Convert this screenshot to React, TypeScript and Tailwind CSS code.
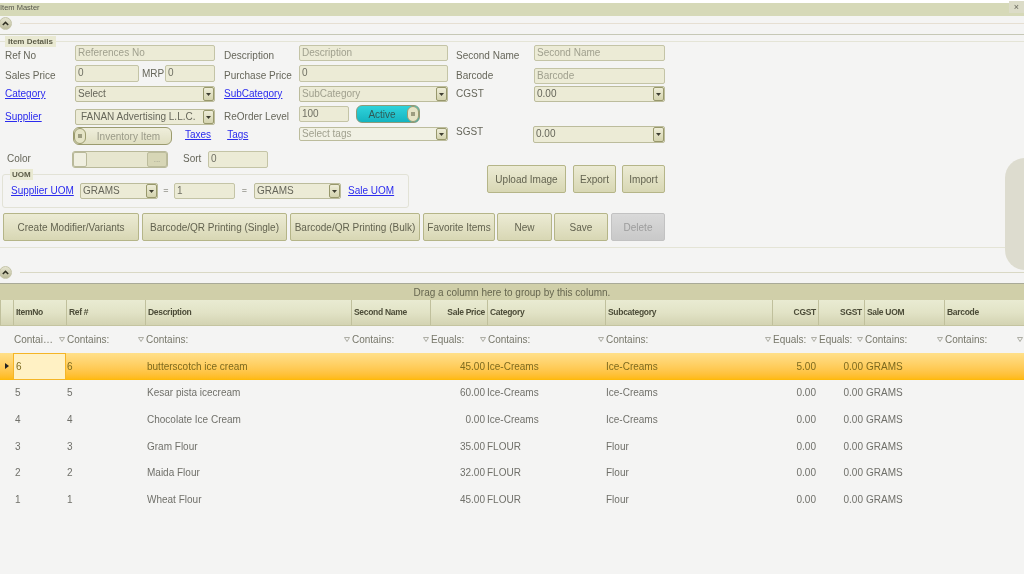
import * as React from "react";

const GRID_COLS =
  "grid grid-cols-[13px_53px_79px_206px_79px_57px_118px_167px_46px_46px_80px_80px]";

const rows = [
  { no: "6", ref: "6", desc: "butterscotch ice cream", price: "45.00", cat: "Ice-Creams", sub: "Ice-Creams", cgst: "5.00" },
  { no: "5", ref: "5", desc: "Kesar pista icecream", price: "60.00", cat: "Ice-Creams", sub: "Ice-Creams", cgst: "0.00" },
  { no: "4", ref: "4", desc: "Chocolate Ice Cream", price: "0.00", cat: "Ice-Creams", sub: "Ice-Creams", cgst: "0.00" },
  { no: "3", ref: "3", desc: "Gram Flour", price: "35.00", cat: "FLOUR", sub: "Flour", cgst: "0.00" },
  { no: "2", ref: "2", desc: "Maida Flour", price: "32.00", cat: "FLOUR", sub: "Flour", cgst: "0.00" },
  { no: "1", ref: "1", desc: "Wheat Flour", price: "45.00", cat: "FLOUR", sub: "Flour", cgst: "0.00" },
];

function Label({ children, className = "" }: { children: React.ReactNode; className?: string }) {
  return <div className={`shrink-0 text-[10px] leading-[16px] text-[#66665a] ${className}`}>{children}</div>;
}

function FormLink({ children, className = "" }: { children: React.ReactNode; className?: string }) {
  return <div className={`shrink-0 text-[10px] leading-[16px] text-[#2b2bee] underline ${className}`}>{children}</div>;
}

function Field({ text, hint, className = "" }: { text?: string; hint?: boolean; className?: string }) {
  return (
    <div
      className={`flex shrink-0 items-center rounded-[2px] border border-[#c4c4a6] bg-[#ecebd6] pb-[2px] pl-[2px] text-[10px] ${
        hint ? "text-[#a0a08e]" : "text-[#707064]"
      } ${className}`}
    >
      {text}
    </div>
  );
}

function Select({ text, hint, className = "" }: { text: string; hint?: boolean; className?: string }) {
  return (
    <div
      className={`flex shrink-0 items-center rounded-[2px] border border-[#bcbc9c] bg-[#ecebd6] text-[10px] ${
        hint ? "text-[#a0a08e]" : "text-[#66665a]"
      } ${className}`}
    >
      <span className="-mt-[2px] min-w-0 flex-1 truncate pl-[2px]">{text}</span>
      <span className="flex h-full w-[11px] items-center justify-center rounded-[2px] border border-[#98986c] bg-gradient-to-b from-[#eeedd8] to-[#d4d3ae]">
        <svg width="5" height="3" viewBox="0 0 5 3">
          <path d="M0 0h5L2.5 3z" fill="#3d3d30" />
        </svg>
      </span>
    </div>
  );
}

function Btn({ children, className = "", disabled }: { children: React.ReactNode; className?: string; disabled?: boolean }) {
  return (
    <div
      className={`flex h-[28px] items-center justify-center whitespace-nowrap rounded-[2px] border text-[10px] ${
        disabled
          ? "border-[#c2c2c2] bg-gradient-to-b from-[#d9d9d9] to-[#c9c9c9] text-[#9c9c9c]"
          : "border-[#b5b588] bg-gradient-to-b from-[#ecebd4] to-[#d8d7b4] text-[#636350]"
      } ${className}`}
    >
      {children}
    </div>
  );
}

function Knob({ className = "" }: { className?: string }) {
  return (
    <span
      className={`flex h-full w-[12px] shrink-0 items-center justify-center rounded-[6px] border border-[#9b9b6e] bg-[#e5e4c6] ${className}`}
    >
      <span className="h-[4px] w-[4px] bg-[#9d9d80]" />
    </span>
  );
}

function Collapse() {
  return (
    <span className="flex h-[13px] w-[13px] shrink-0 items-center justify-center rounded-full border border-[#c4c4a8] bg-gradient-to-b from-[#e6e5d0] to-[#bdbc9c]">
      <svg width="7" height="5" viewBox="0 0 7 5">
        <path d="M0.8 4L3.5 1.4L6.2 4" fill="none" stroke="#2e2e22" strokeWidth="1.5" />
      </svg>
    </span>
  );
}

function Legend({ children, className = "" }: { children: React.ReactNode; className?: string }) {
  return (
    <div className={`absolute bg-[#e9e9d2] px-[2px] text-[8px] font-bold leading-[11px] text-[#5c5c48] ${className}`}>
      {children}
    </div>
  );
}

function HeaderCell({ children, right }: { children?: React.ReactNode; right?: boolean }) {
  return (
    <div
      className={`flex items-center whitespace-nowrap border-l border-[#c0c09c] px-[2px] pb-[1px] text-[8.5px] font-bold tracking-[-0.3px] text-[#4c4c38] ${
        right ? "justify-end" : ""
      } bg-gradient-to-b from-[#e9ebd2] via-[#e2e3c6] to-[#d3d3b2]`}
    >
      {children}
    </div>
  );
}

function FilterCell({ children }: { children: React.ReactNode }) {
  return (
    <div className="flex items-center justify-between pl-[1px] pr-[1px] text-[10px] text-[#77776a]">
      <span className="min-w-0 truncate">{children}</span>
      <svg width="6" height="5" viewBox="0 0 6 5" className="shrink-0">
        <path d="M0.5 0.5h5L3 4.5z" fill="none" stroke="#9c9c90" strokeWidth="0.8" />
      </svg>
    </div>
  );
}

export default function App() {
  return (
    <div
      className="relative flex h-[576px] w-[1024px] flex-col overflow-hidden bg-[#f4f4f3] blur-[0.5px]"
      style={{ fontFamily: '"Liberation Sans", Arial, sans-serif' }}
    >
      <div className="h-[3px] bg-white" />
      <div className="relative h-[13px] bg-[#d6d9b8] text-[7.5px] leading-[10px] text-[#55554a]">
        <span className="block">Item Master</span>
        <div className="absolute right-0 top-[-2px] flex h-[12px] w-[15px] items-center justify-center bg-[#dcdcc8] text-[9px] text-[#66665a]">
          ×
        </div>
      </div>

      <div className="flex h-[18px] items-center pb-[3px]">
        <div className="-ml-[1px] flex items-center">
          <Collapse />
        </div>
        <div className="ml-[8px] h-px flex-1 bg-[#e6dfd2]" />
      </div>
      <div className="h-px bg-[#c6c8b6]" />

      {/* Item details panel */}
      <div className="relative mt-[6px] h-[207px] border-y border-[#e4e4d6] pt-[3px]">
        <Legend className="-top-[6px] left-[5px] px-[3px]">Item Details</Legend>
        <div className="absolute -right-px top-[116px] h-[112px] w-[20px] rounded-l-[20px] bg-[#dddccf]" />

        <div className="flex h-[17px]">
          <div className="flex w-[224px] pl-[5px]">
            <Label className="w-[70px] pt-[3px]">Ref No</Label>
            <Field hint text="References No" className="h-[16px] w-[140px]" />
          </div>
          <div className="flex w-[232px]">
            <Label className="w-[75px] pt-[3px]">Description</Label>
            <Field hint text="Description" className="h-[16px] w-[149px]" />
          </div>
          <div className="flex">
            <Label className="w-[78px] pt-[3px]">Second Name</Label>
            <Field hint text="Second Name" className="h-[16px] w-[131px]" />
          </div>
        </div>

        <div className="mt-[3px] flex h-[20px]">
          <div className="flex w-[224px] pl-[5px]">
            <Label className="w-[70px] pt-[3px]">Sales Price</Label>
            <Field text="0" className="h-[17px] w-[64px]" />
            <Label className="w-[26px] pl-[3px] pt-[1px]">MRP</Label>
            <Field text="0" className="h-[17px] w-[50px]" />
          </div>
          <div className="flex w-[232px]">
            <Label className="w-[75px] pt-[3px]">Purchase Price</Label>
            <Field text="0" className="h-[17px] w-[149px]" />
          </div>
          <div className="flex pt-[3px]">
            <Label className="w-[78px]">Barcode</Label>
            <Field hint text="Barcode" className="h-[16px] w-[131px]" />
          </div>
        </div>

        <div className="mt-px flex h-[19px]">
          <div className="flex w-[224px] pl-[5px]">
            <FormLink className="w-[70px] pt-0">Category</FormLink>
            <Select text="Select" className="h-[16px] w-[140px]" />
          </div>
          <div className="flex w-[232px]">
            <FormLink className="w-[75px] pt-0">SubCategory</FormLink>
            <Select hint text="SubCategory" className="h-[16px] w-[149px]" />
          </div>
          <div className="flex">
            <Label className="w-[78px] pt-0">CGST</Label>
            <Select text="0.00" className="h-[16px] w-[131px]" />
          </div>
        </div>

        <div className="flex h-[21px]">
          <div className="flex w-[224px] pl-[5px] pt-[4px]">
            <FormLink className="w-[70px]">Supplier</FormLink>
            <Select text="FANAN Advertising L.L.C." className="h-[16px] w-[140px] [&>span:first-child]:pl-[5px]" />
          </div>
          <div className="flex w-[232px] pt-px">
            <Label className="w-[75px] pt-[3px]">ReOrder Level</Label>
            <Field text="100" className="h-[16px] w-[50px]" />
            <div className="ml-[7px] -mt-px flex h-[18px] w-[64px] shrink-0 items-center justify-between rounded-[6px] border border-[#8e9a7a] bg-gradient-to-b from-[#2fd3db] to-[#14b4c0] text-[10px] text-[#2f5a56]">
              <span className="flex-1 text-center">Active</span>
              <Knob />
            </div>
          </div>
        </div>

        <div className="flex h-[25px]">
          <div className="flex w-[224px] items-start pl-[73px] pt-px">
            <div className="flex h-[18px] w-[99px] shrink-0 items-center rounded-[6px] border border-[#9b9b6e] bg-gradient-to-b from-[#efeedb] to-[#e0dfc2] text-[10px] text-[#9a9a88]">
              <Knob />
              <span className="flex-1 whitespace-nowrap text-center">Inventory Item</span>
            </div>
            <FormLink className="ml-[13px]">Taxes</FormLink>
            <FormLink className="ml-[16px]">Tags</FormLink>
          </div>
          <div className="flex w-[232px] pt-px">
            <div className="w-[75px]" />
            <Select hint text="Select tags" className="h-[14px] w-[149px] bg-[#f1f1e4]" />
          </div>
          <div className="flex">
            <Label className="-mt-[2px] w-[77px]">SGST</Label>
            <Select text="0.00" className="h-[17px] w-[132px]" />
          </div>
        </div>

        <div className="flex h-[61px]">
          <div className="w-[487px]">
            <div className="flex h-[17px] items-start">
              <Label className="w-[72px] pl-[7px]">Color</Label>
              <div className="flex h-[17px] w-[96px] items-stretch rounded-[3px] border border-[#b9b99a] bg-[#e7e6cf]">
                <span className="w-[14px] rounded-[2px] border border-[#b9b99a] bg-[#f0efe0]" />
                <span className="flex-1" />
                <span className="flex w-[20px] items-center justify-center rounded-[2px] border border-[#bcbc9c] bg-[#d7d6b6] text-[8px] leading-[8px] text-[#9a9a88]">
                  ...
                </span>
              </div>
              <Label className="ml-[15px] w-[25px]">Sort</Label>
              <Field text="0" className="h-[17px] w-[60px]" />
            </div>
            <div className="relative ml-[2px] mt-[6px] flex h-[34px] w-[407px] items-center rounded-[3px] border border-[#e2e2d6] pl-[8px]">
              <Legend className="-top-[6px] left-[7px] px-[2px]">UOM</Legend>
              <FormLink className="w-[69px]">Supplier UOM</FormLink>
              <Select text="GRAMS" className="h-[16px] w-[78px]" />
              <span className="w-[16px] shrink-0 text-center text-[9px] text-[#66665a]">=</span>
              <Field text="1" className="h-[16px] w-[61px]" />
              <span className="w-[19px] shrink-0 text-center text-[9px] text-[#66665a]">=</span>
              <Select text="GRAMS" className="h-[16px] w-[87px]" />
              <FormLink className="ml-[7px]">Sale UOM</FormLink>
            </div>
          </div>
          <div className="flex pt-[14px]">
            <Btn className="w-[79px]">Upload Image</Btn>
            <Btn className="ml-[7px] w-[43px]">Export</Btn>
            <Btn className="ml-[6px] w-[43px]">Import</Btn>
          </div>
        </div>

        <div className="ml-[3px] mt-[1px] flex">
          <Btn className="w-[136px]">Create Modifier/Variants</Btn>
          <Btn className="ml-[3px] w-[145px]">Barcode/QR Printing (Single)</Btn>
          <Btn className="ml-[3px] w-[130px]">Barcode/QR Printing (Bulk)</Btn>
          <Btn className="ml-[3px] w-[72px]">Favorite Items</Btn>
          <Btn className="ml-[2px] w-[55px]">New</Btn>
          <Btn className="ml-[2px] w-[54px]">Save</Btn>
          <Btn disabled className="ml-[3px] w-[54px]">Delete</Btn>
        </div>
      </div>

      <div className="mt-[17px] flex h-[15px] items-center">
        <div className="-ml-[1px] flex items-center">
          <Collapse />
        </div>
        <div className="ml-[8px] h-px flex-1 bg-[#d9d8c4]" />
      </div>

      {/* Data grid */}
      <div className="mt-[3px] flex h-[17px] items-center justify-center border-t border-[#a9aa98] bg-[#d0cfa9] text-[10px] text-[#66664f]">
        Drag a column here to group by this column.
      </div>
      <div className={`${GRID_COLS} h-[26px] border-b border-[#c4c4a0]`}>
        <HeaderCell />
        <HeaderCell>ItemNo</HeaderCell>
        <HeaderCell>Ref #</HeaderCell>
        <HeaderCell>Description</HeaderCell>
        <HeaderCell>Second Name</HeaderCell>
        <HeaderCell right>Sale Price</HeaderCell>
        <HeaderCell>Category</HeaderCell>
        <HeaderCell>Subcategory</HeaderCell>
        <HeaderCell right>CGST</HeaderCell>
        <HeaderCell right>SGST</HeaderCell>
        <HeaderCell>Sale UOM</HeaderCell>
        <HeaderCell>Barcode</HeaderCell>
      </div>
      <div className={`${GRID_COLS} h-[27px]`}>
        <div />
        <FilterCell>Contai…</FilterCell>
        <FilterCell>Contains:</FilterCell>
        <FilterCell>Contains:</FilterCell>
        <FilterCell>Contains:</FilterCell>
        <FilterCell>Equals:</FilterCell>
        <FilterCell>Contains:</FilterCell>
        <FilterCell>Contains:</FilterCell>
        <FilterCell>Equals:</FilterCell>
        <FilterCell>Equals:</FilterCell>
        <FilterCell>Contains:</FilterCell>
        <FilterCell>Contains:</FilterCell>
      </div>
      {rows.map((r, i) => {
        const selected = i === 0;
        return (
          <div
            key={r.no}
            className={`${GRID_COLS} h-[26.6px] items-center text-[10px] ${
              selected
                ? "bg-gradient-to-b from-[#ffe08a] to-[#ffb900] text-[#7d6a1f]"
                : "text-[#70706a]"
            }`}
          >
            <div className="flex items-center justify-center">
              {selected && (
                <svg width="4" height="6" viewBox="0 0 4 6">
                  <path d="M0 0l4 3-4 3z" fill="#222" />
                </svg>
              )}
            </div>
            <div
              className={`flex h-full items-center pl-[2px] ${
                selected ? "border border-[#f5b526] bg-[#fff1c4]" : ""
              }`}
            >
              {r.no}
            </div>
            <div className="pl-[1px]">{r.ref}</div>
            <div className="pl-[2px]">{r.desc}</div>
            <div />
            <div className="pr-[2px] text-right">{r.price}</div>
            <div>{r.cat}</div>
            <div className="pl-[1px]">{r.sub}</div>
            <div className="pr-[2px] text-right">{r.cgst}</div>
            <div className="pr-[1px] text-right">0.00</div>
            <div className="pl-[2px]">GRAMS</div>
            <div />
          </div>
        );
      })}
      <div className="mt-auto h-[2px] bg-white" />
    </div>
  );
}
